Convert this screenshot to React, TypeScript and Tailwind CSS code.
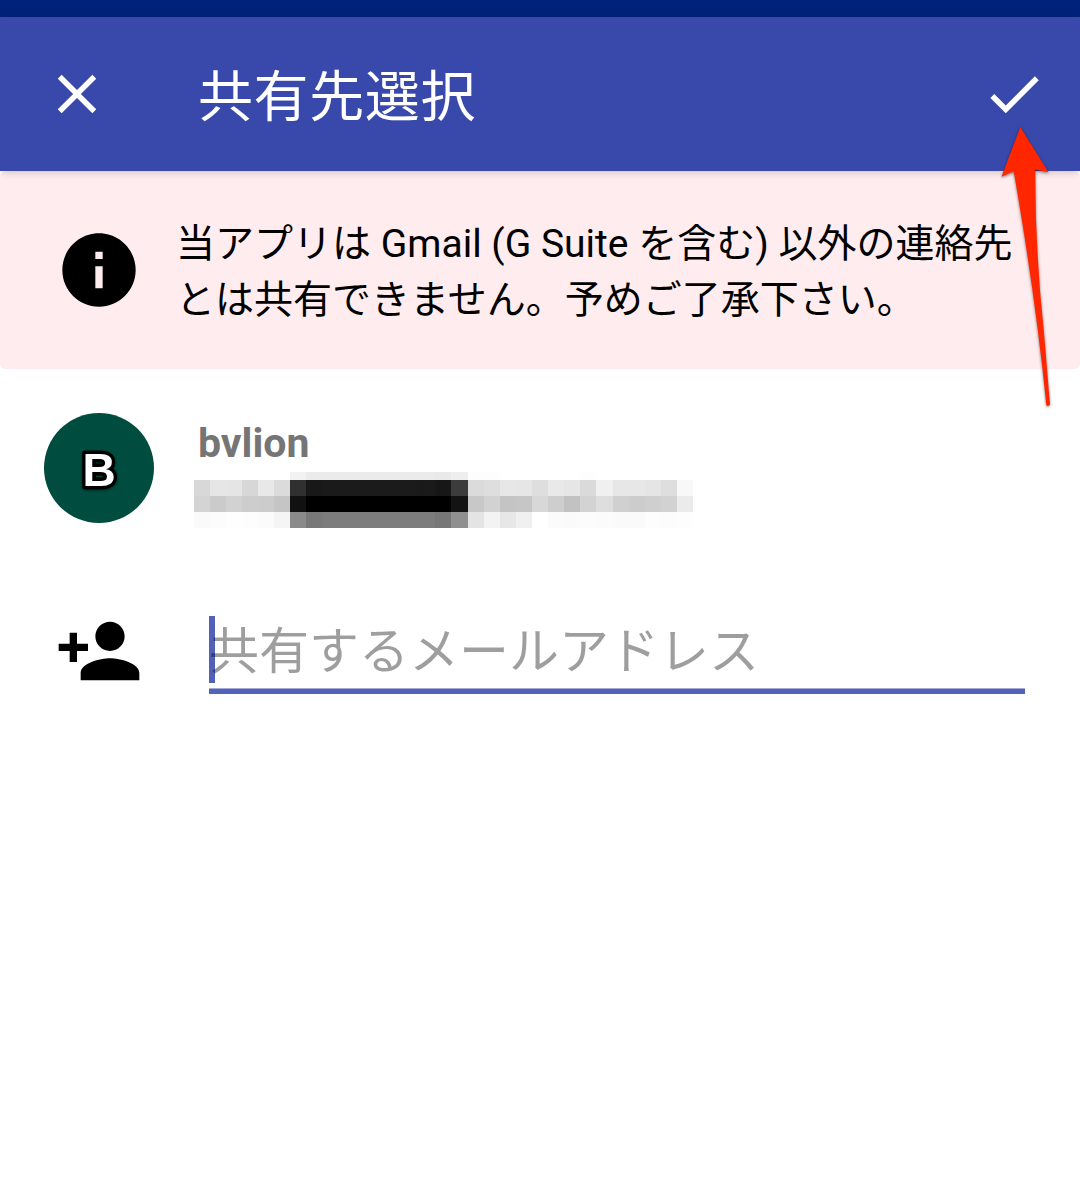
const MOSAIC: number[][] = [
  [255, 255, 255, 255, 255, 255, 242, 235, 235, 235, 235, 235, 235, 235, 235, 233, 238, 253, 253, 255, 255, 255, 255, 255, 253, 255, 255, 255, 255, 255, 255],
  [216, 230, 229, 215, 232, 219, 48, 24, 26, 27, 27, 27, 27, 27, 26, 23, 60, 219, 222, 231, 230, 222, 233, 230, 218, 240, 231, 231, 229, 222, 248],
  [212, 203, 210, 205, 204, 197, 17, 0, 0, 0, 0, 0, 0, 0, 0, 0, 19, 200, 210, 196, 198, 216, 206, 194, 211, 222, 208, 204, 207, 210, 235],
  [250, 252, 254, 253, 251, 245, 138, 120, 124, 125, 125, 125, 125, 125, 124, 119, 143, 228, 243, 231, 240, 255, 251, 250, 252, 251, 250, 250, 253, 252, 253],
];

function Icon({ d, className }: { d: string; className: string }) {
  return (
    <svg viewBox="0 0 24 24" fill="currentColor" className={className}>
      <path d={d} />
    </svg>
  );
}

function Mosaic() {
  return (
    <div className="-ml-[0.3px] flex w-[499.3px] flex-col">
      {MOSAIC.map((row, i) => (
        <div key={i} className={i === 0 ? "flex h-[8px]" : "flex h-[16px]"}>
          {row.map((v, j) => (
            <div key={j} className="flex-1" style={{ backgroundColor: `rgb(${v},${v},${v})` }} />
          ))}
        </div>
      ))}
    </div>
  );
}

export default function App() {
  return (
    <div className="relative flex h-[1200px] w-[1080px] flex-col overflow-hidden bg-white font-['Roboto','Noto_Sans_CJK_JP',sans-serif]" lang="ja">
      <div className="h-[17px] shrink-0 bg-[#00227a]" />
      <header className="z-10 flex h-[154px] shrink-0 items-center bg-[#3949ab] pr-[33px] pl-[44px] text-white shadow-[0_1px_8px_rgba(0,0,0,0.2)]">
        <Icon
          className="size-[66px]"
          d="M19 6.41L17.59 5 12 10.59 6.41 5 5 6.41 10.59 12 5 17.59 6.41 19 12 13.41 17.59 19 19 17.59 13.41 12z"
        />
        <h1 className="mt-[6px] ml-[88px] flex-1 text-[55px] leading-[66px] tracking-[0.6px]">共有先選択</h1>
        <Icon className="size-[66px]" d="M9 16.17L4.83 12l-1.42 1.41L9 19 21 7l-1.41-1.41z" />
      </header>

      <section className="flex h-[198px] shrink-0 items-center rounded-[6px] bg-[#ffecee] pl-[55px] text-black">
        <Icon
          className="size-[88px] shrink-0"
          d="M12 2C6.48 2 2 6.48 2 12s4.48 10 10 10 10-4.48 10-10S17.52 2 12 2zm1 15h-2v-6h2v6zm0-8h-2V7h2v2z"
        />
        <p className="mt-[4px] ml-[33px] text-[39px] leading-[56px] whitespace-nowrap">
          当アプリは Gmail (G Suite を含む) 以外の連絡先
          <br />
          とは共有できません。予めご了承下さい。
        </p>
      </section>

      <section className="mt-[44px] flex h-[115px] shrink-0 pl-[44px]">
        <div className="flex size-[110px] items-center justify-center rounded-full bg-[#004d40]">
          <svg viewBox="0 0 110 110" className="size-[110px] drop-shadow-[0_1px_1.5px_rgba(0,0,0,0.4)]">
            <text
              x="55"
              y="73"
              textAnchor="middle"
              className="fill-white stroke-black stroke-[7px] font-['Liberation_Sans'] text-[46px] font-bold [paint-order:stroke_fill] [stroke-linejoin:round]"
            >
              B
            </text>
          </svg>
        </div>
        <div className="ml-[40px] flex flex-col">
          <div className="ml-[4px] h-[59px] pt-[6px] text-[41px] leading-[48px] font-bold text-[#757575]">bvlion</div>
          <Mosaic />
        </div>
      </section>

      <section className="mt-[79px] flex shrink-0 pl-[55px]">
        <Icon
          className="size-[88px]"
          d="M15 12c2.21 0 4-1.79 4-4s-1.79-4-4-4-4 1.79-4 4 1.79 4 4 4zm-9-2V7H4v3H1v2h3v3h2v-3h3v-2H6zm9 4c-2.67 0-8 1.34-8 4v2h16v-2c0-2.66-5.33-4-8-4z"
        />
        <div className="relative mt-[9px] ml-[66px] flex h-[78px] w-[816px] flex-col justify-between text-black/38">
          <span className="absolute top-0 left-0 h-[67px] w-[6px] bg-[#5262b8]" />
          <span className="relative pt-[2px] text-[50px] leading-[68px] whitespace-nowrap">共有するメールアドレス</span>
          <span className="h-[6px] border-t border-[#a3abd9] bg-[#5262b8]" />
        </div>
      </section>

      <svg
        viewBox="0 0 70 300"
        className="absolute top-[120px] left-[990px] z-20 h-[300px] w-[70px] drop-shadow-[0_1px_1.5px_rgba(0,0,0,0.5)]"
        fill="#ff2600"
      >
        <path d="M30.3 7 L58.5 52.3 L45.3 49.5 Q45 130 54 213 L60 284.5 Q58 287 56.3 285 Q46 180 23.7 51.3 L11.5 56.8 Z" />
      </svg>
    </div>
  );
}
